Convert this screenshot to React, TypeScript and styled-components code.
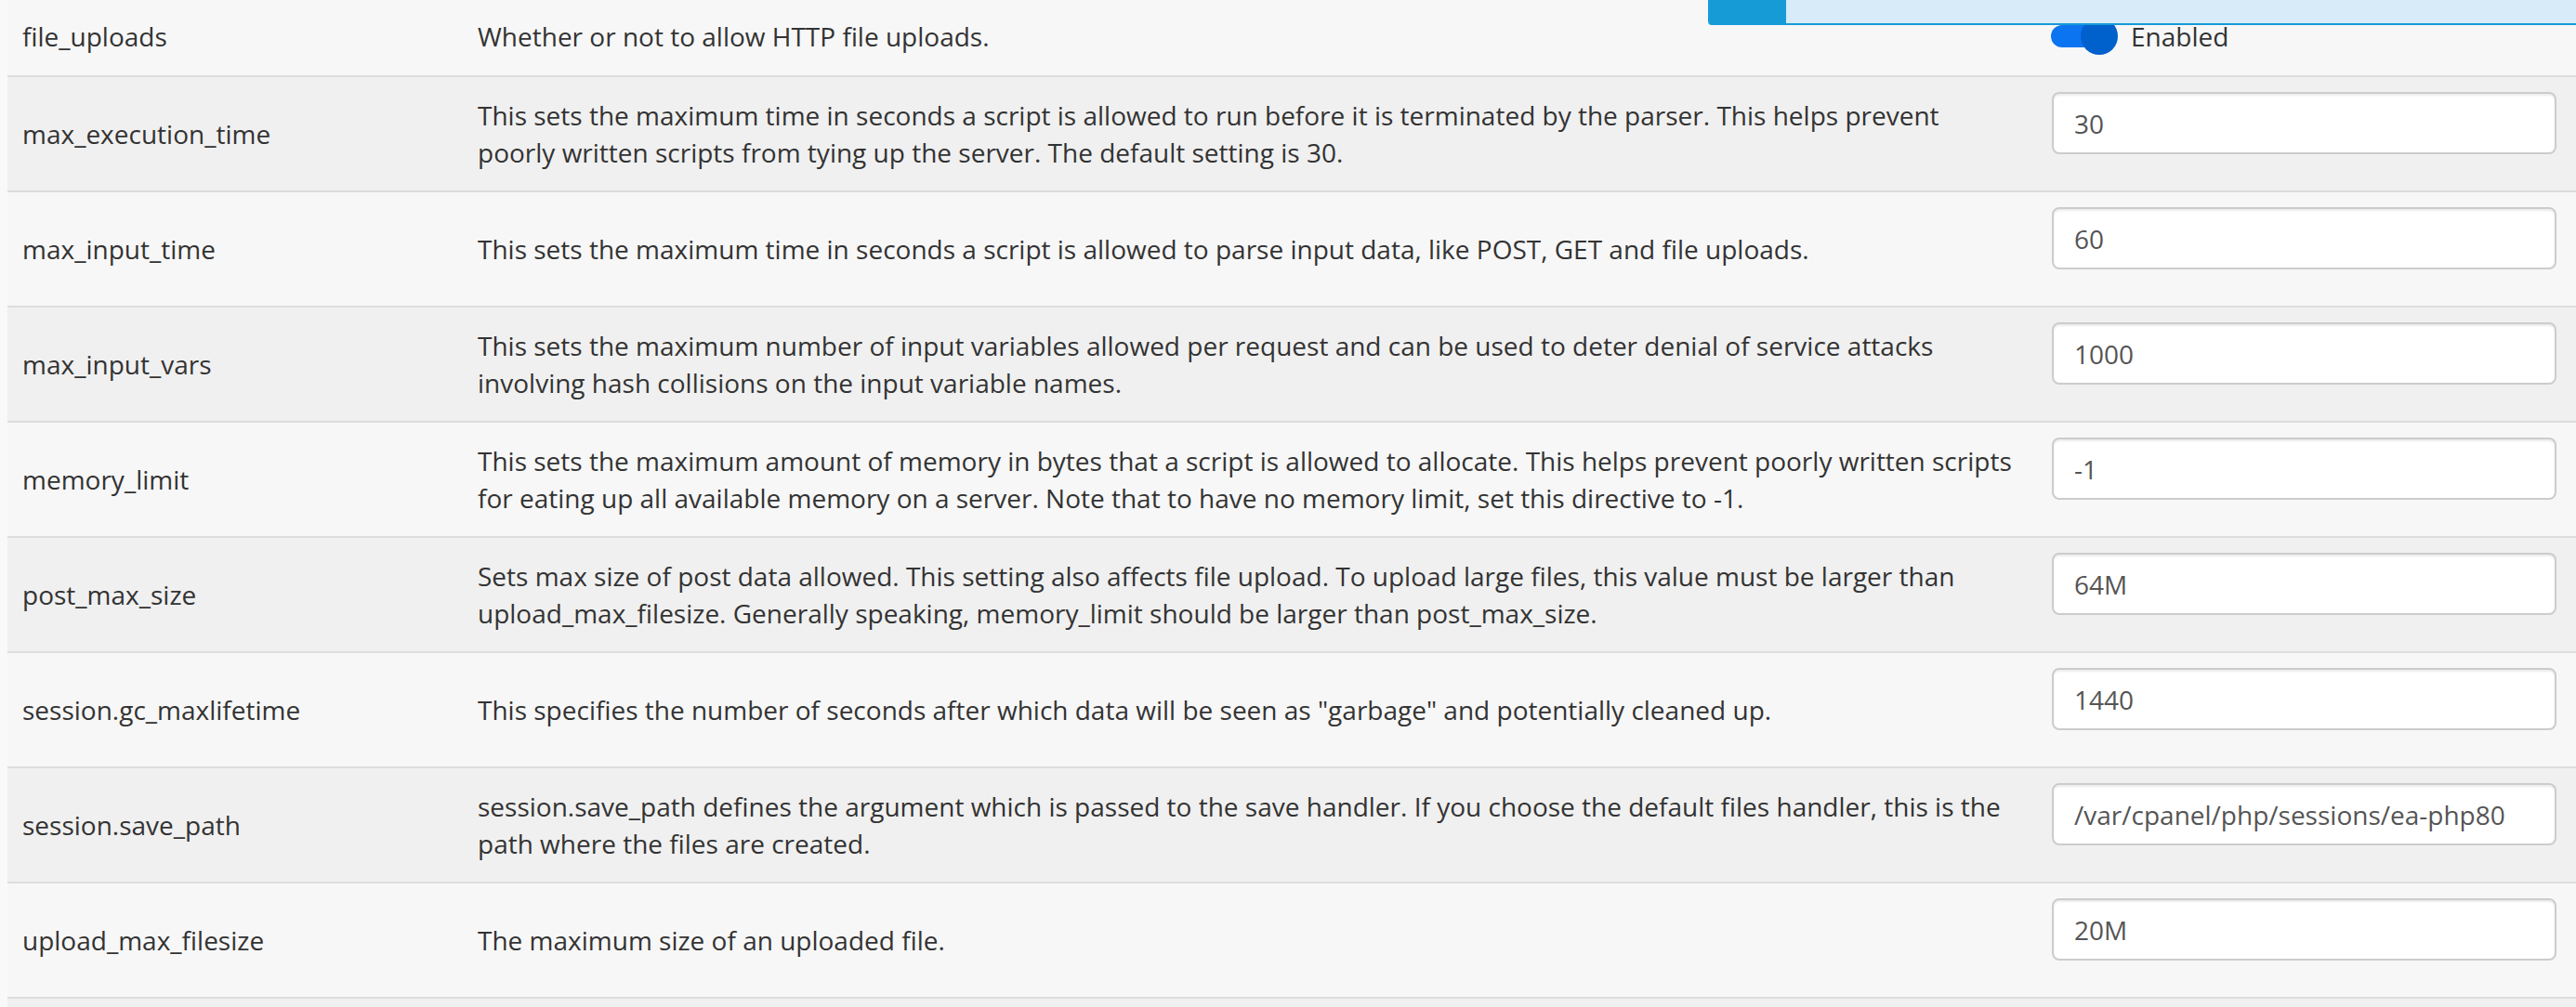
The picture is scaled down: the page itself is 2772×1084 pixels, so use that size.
import React from "react";
import styled, { createGlobalStyle } from "styled-components";

const Global = createGlobalStyle`
  html, body { margin: 0; padding: 0; background: #f9f9f9; }
  body { font-family: "Open Sans", "Liberation Sans", sans-serif; color: #333; overflow: hidden; }
  * { box-sizing: border-box; }
`;

const Page = styled.div`
  position: relative;
  width: 2772px;
  height: 1084px;
  overflow: hidden;
  padding-left: 8px;
  background: #f9f9f9;
`;

const Table = styled.div`
  display: flex;
  flex-direction: column;
`;

const Row = styled.div<{ $alt: boolean; $compact?: boolean }>`
  display: grid;
  grid-template-columns: 490px 1fr 580px;
  min-height: ${(p) => (p.$compact ? "83px" : "124px")};
  padding-bottom: ${(p) => (p.$compact ? "4px" : "0")};
  background: ${(p) => (p.$alt ? "#f0f0f0" : "#f7f7f7")};
  border-bottom: 2px solid #dddddd;
`;

const NameCell = styled.div`
  display: flex;
  align-items: center;
  padding: 0 16px;
  font-size: 28px;
  line-height: 40px;
  color: #333;
`;

const DescCell = styled.div`
  display: flex;
  align-items: center;
  padding: 0 24px 0 16px;
  font-size: 28px;
  line-height: 40px;
  color: #333;
`;

const ValueCell = styled.div<{ $center?: boolean }>`
  display: flex;
  align-items: ${(p) => (p.$center ? "center" : "flex-start")};
  padding: ${(p) => (p.$center ? "0 21px 0 15px" : "16px 21px 0 16px")};
`;

const Input = styled.input`
  width: 543px;
  height: 67px;
  border: 2px solid #cccccc;
  border-radius: 8px;
  background: #fff;
  box-shadow: inset 0 2px 2px rgba(0, 0, 0, 0.075);
  padding: 0 22px;
  font-family: "Open Sans", "Liberation Sans", sans-serif;
  font-size: 28px;
  color: #555;
  outline: none;
`;

const ToggleWrap = styled.label`
  display: flex;
  align-items: center;
  gap: 14px;
  font-size: 28px;
  line-height: 40px;
  color: #333;
`;

const Switch = styled.span`
  position: relative;
  display: block;
  width: 72px;
  height: 40px;
`;

const Track = styled.span`
  position: absolute;
  left: 0;
  top: 8px;
  width: 60px;
  height: 24px;
  border-radius: 12px;
  background: #0b74f1;
`;

const Knob = styled.span`
  position: absolute;
  right: 0;
  top: 0;
  width: 40px;
  height: 40px;
  border-radius: 50%;
  background: #0060cc;
`;

const Alert = styled.div`
  position: absolute;
  top: 0;
  left: 1838px;
  right: 0;
  height: 27px;
  display: flex;
  border-bottom: 2px solid #179bd7;
  border-bottom-left-radius: 4px;
  overflow: hidden;
  z-index: 2;
`;

const AlertIcon = styled.div`
  width: 84px;
  background: #179bd7;
`;

const AlertBody = styled.div`
  flex: 1;
  background: #d7ebf8;
`;

type Item = { name: string; desc: string; value: string };

const items: Item[] = [
  {
    name: "max_execution_time",
    desc: "This sets the maximum time in seconds a script is allowed to run before it is terminated by the parser. This helps prevent poorly written scripts from tying up the server. The default setting is 30.",
    value: "30",
  },
  {
    name: "max_input_time",
    desc: "This sets the maximum time in seconds a script is allowed to parse input data, like POST, GET and file uploads.",
    value: "60",
  },
  {
    name: "max_input_vars",
    desc: "This sets the maximum number of input variables allowed per request and can be used to deter denial of service attacks involving hash collisions on the input variable names.",
    value: "1000",
  },
  {
    name: "memory_limit",
    desc: "This sets the maximum amount of memory in bytes that a script is allowed to allocate. This helps prevent poorly written scripts for eating up all available memory on a server. Note that to have no memory limit, set this directive to -1.",
    value: "-1",
  },
  {
    name: "post_max_size",
    desc: "Sets max size of post data allowed. This setting also affects file upload. To upload large files, this value must be larger than upload_max_filesize. Generally speaking, memory_limit should be larger than post_max_size.",
    value: "64M",
  },
  {
    name: "session.gc_maxlifetime",
    desc: 'This specifies the number of seconds after which data will be seen as "garbage" and potentially cleaned up.',
    value: "1440",
  },
  {
    name: "session.save_path",
    desc: "session.save_path defines the argument which is passed to the save handler. If you choose the default files handler, this is the path where the files are created.",
    value: "/var/cpanel/php/sessions/ea-php80",
  },
  {
    name: "upload_max_filesize",
    desc: "The maximum size of an uploaded file.",
    value: "20M",
  },
];

export default function App() {
  return (
    <>
      <Global />
      <Page>
        <Alert>
          <AlertIcon />
          <AlertBody />
        </Alert>
        <Table>
          <Row $alt={false} $compact>
            <NameCell>file_uploads</NameCell>
            <DescCell>Whether or not to allow HTTP file uploads.</DescCell>
            <ValueCell $center>
              <ToggleWrap>
                <Switch>
                  <Track />
                  <Knob />
                </Switch>
                Enabled
              </ToggleWrap>
            </ValueCell>
          </Row>
          {items.map((it, i) => (
            <Row key={it.name} $alt={i % 2 === 0}>
              <NameCell>{it.name}</NameCell>
              <DescCell>{it.desc}</DescCell>
              <ValueCell>
                <Input defaultValue={it.value} readOnly />
              </ValueCell>
            </Row>
          ))}
          <Row $alt={true}>
            <NameCell />
            <DescCell />
            <ValueCell />
          </Row>
        </Table>
      </Page>
    </>
  );
}
